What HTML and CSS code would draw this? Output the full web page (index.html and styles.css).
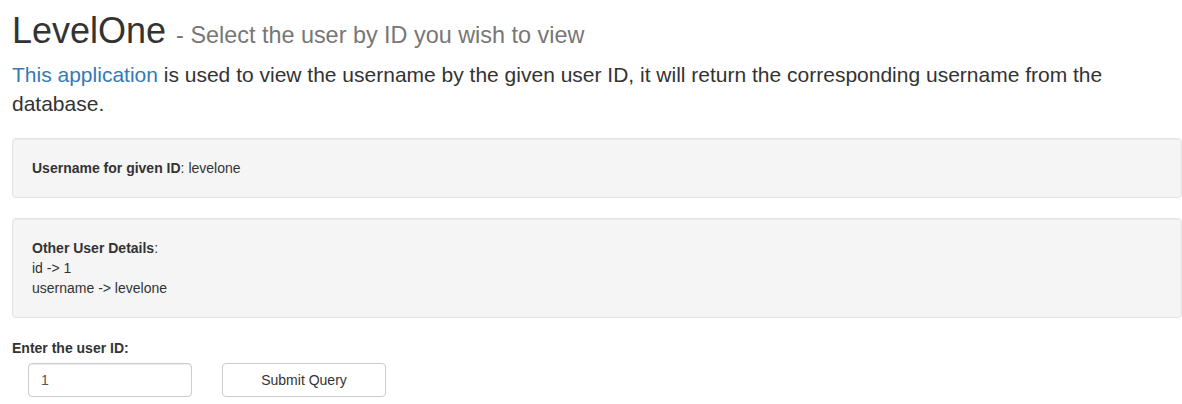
FILE: index.html
```html
<!DOCTYPE html>
<html lang="en">
<head>
<meta charset="utf-8">
<title>LevelOne</title>
<link rel="stylesheet" href="styles.css">
</head>
<body>
<div class="page">
  <h1 class="title">LevelOne <small class="subtitle">- Select the user by ID you wish to view</small></h1>
  <p class="lead"><a class="link" href="#">This application</a> is used to view the username by the given user ID, it will return the corresponding username from the database.</p>
  <div class="well"><b>Username for given ID</b>: levelone</div>
  <div class="well"><b>Other User Details</b>:<br>id -&gt; 1<br>username -&gt; levelone</div>
  <form class="form" onsubmit="return false;">
    <label class="label" for="uid">Enter the user ID:</label>
    <div class="form-row">
      <input class="input" id="uid" type="text" value="1">
      <button class="button" type="submit">Submit Query</button>
    </div>
  </form>
</div>
</body>
</html>
```
FILE: styles.css
```css
html, body {
  margin: 0;
  padding: 0;
  background: #fff;
}
body {
  font-family: "Liberation Sans", Arial, Helvetica, sans-serif;
  font-size: 14px;
  line-height: 20px;
  color: #333;
}
.page {
  padding: 0 0 0 12px;
}
.title {
  margin: 12px 0 6px;
  font-size: 36px;
  line-height: 38px;
  font-weight: 500;
  color: #333;
}
.subtitle {
  font-size: 65%;
  font-weight: 400;
  color: #777;
}
.lead {
  margin: 0 0 19px;
  font-size: 21px;
  line-height: 1.4;
  font-weight: 300;
}
.link {
  color: #337ab7;
  text-decoration: none;
}
.well {
  min-height: 20px;
  padding: 19px;
  margin-bottom: 20px;
  background: #f5f5f5;
  border: 1px solid #e3e3e3;
  border-radius: 4px;
  box-shadow: inset 0 1px 1px rgba(0, 0, 0, .05);
}
.well b {
  font-weight: 700;
}
.form {
  margin: 0;
}
.label {
  display: block;
  margin: 0 0 5px;
  font-weight: 700;
  line-height: 20px;
}
.form-row {
  display: flex;
  gap: 30px;
  padding-left: 16px;
}
.input {
  box-sizing: border-box;
  width: 164px;
  height: 34px;
  padding: 6px 12px;
  font-family: inherit;
  font-size: 14px;
  line-height: 20px;
  color: #555;
  background: #fff;
  border: 1px solid #ccc;
  border-radius: 4px;
  box-shadow: inset 0 1px 1px rgba(0, 0, 0, .075);
  outline: none;
}
.button {
  box-sizing: border-box;
  width: 164px;
  height: 34px;
  padding: 6px 12px;
  font-family: inherit;
  font-size: 14px;
  line-height: 20px;
  color: #333;
  background: #fff;
  border: 1px solid #ccc;
  border-radius: 4px;
  cursor: pointer;
}
```
